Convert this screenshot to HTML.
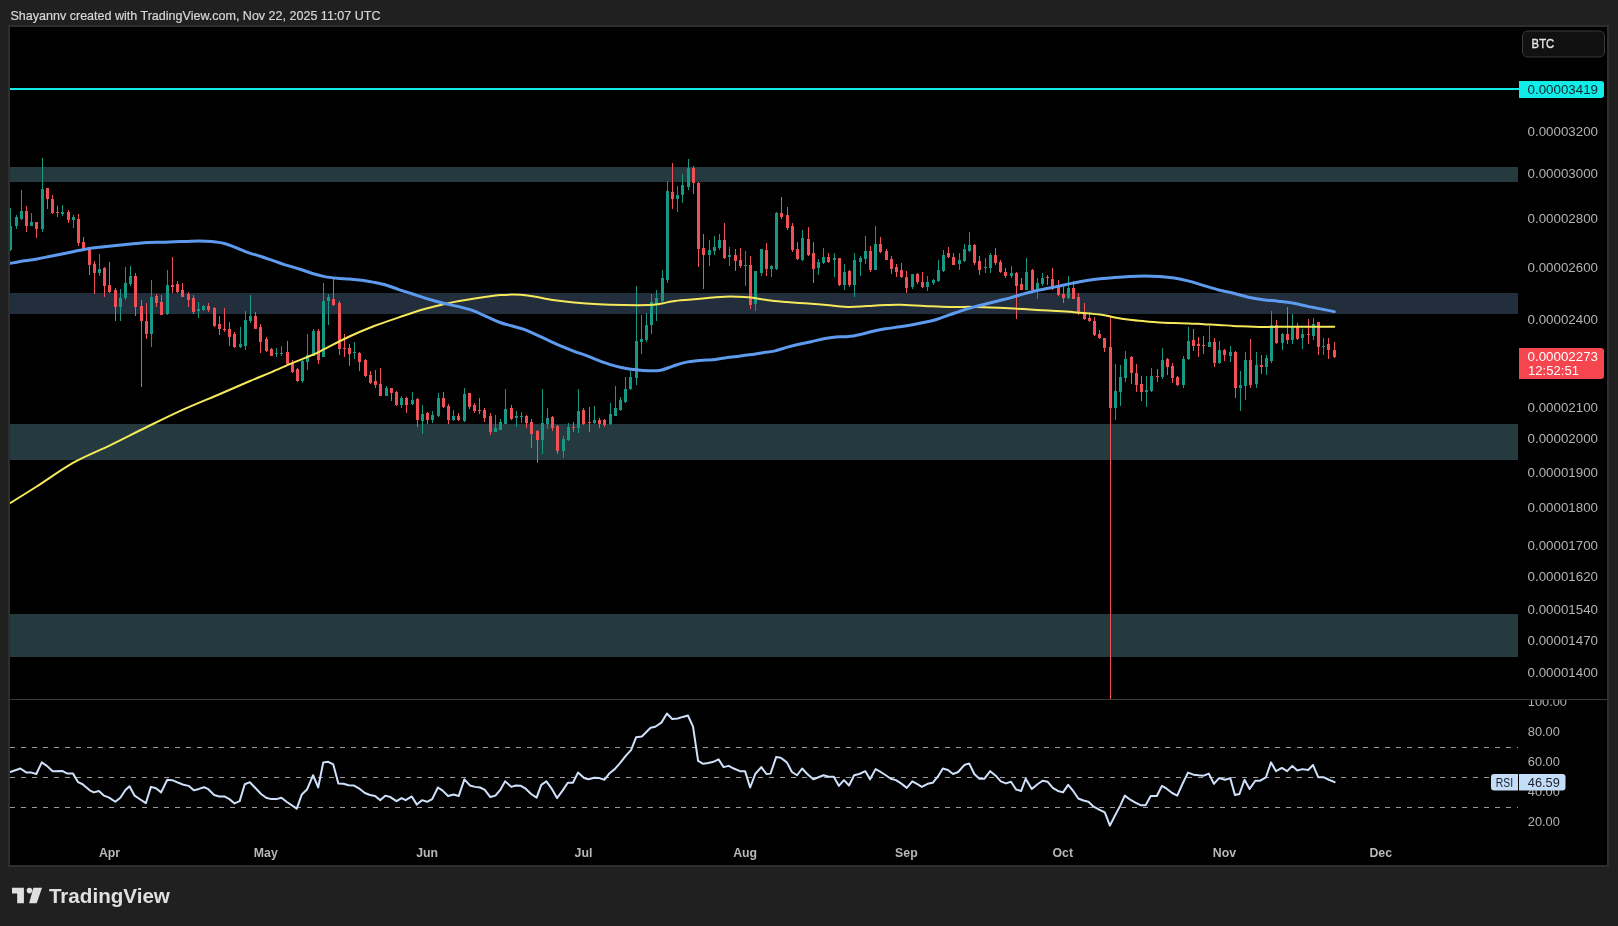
<!DOCTYPE html>
<html><head><meta charset="utf-8"><title>TradingView chart</title>
<style>html,body{margin:0;padding:0;background:#202020;}body{width:1618px;height:926px;position:relative;overflow:hidden;font-family:"Liberation Sans",sans-serif;}</style>
</head><body>
<svg width="1618" height="926" viewBox="0 0 1618 926" style="position:absolute;left:0;top:0;will-change:transform"><defs><clipPath id="cp"><rect x="10" y="27" width="1508" height="672"/></clipPath><clipPath id="cr"><rect x="10" y="700" width="1597" height="165"/></clipPath><clipPath id="ca"><rect x="1518" y="700" width="89" height="165"/></clipPath></defs><rect x="8" y="25" width="1601" height="842" fill="#2e2e2e"/><rect x="10" y="27" width="1597" height="838" fill="#000"/><text x="10.5" y="20" fill="#d6d6d6" font-size="12.6" stroke="#d6d6d6" stroke-width="0.2" font-family="Liberation Sans, sans-serif" textLength="370" lengthAdjust="spacingAndGlyphs">Shayannv created with TradingView.com, Nov 22, 2025 11:07 UTC</text><rect x="10" y="167" width="1508" height="15" fill="#243a3e"/><rect x="10" y="293" width="1508" height="21" fill="#232e3c"/><rect x="10" y="424" width="1508" height="36" fill="#243a3e"/><rect x="10" y="614" width="1508" height="43" fill="#243a3e"/><rect x="10" y="88" width="1509" height="2" fill="#12ece8"/><g clip-path="url(#cp)"><rect x="10" y="208" width="1" height="43" fill="#189784"/><rect x="9" y="226" width="3" height="24" fill="#189784"/><rect x="16" y="215" width="1" height="14" fill="#189784"/><rect x="15" y="217" width="3" height="9" fill="#189784"/><rect x="21" y="190" width="1" height="30" fill="#189784"/><rect x="20" y="211" width="3" height="8" fill="#189784"/><rect x="26" y="206" width="1" height="26" fill="#ef5156"/><rect x="25" y="211" width="3" height="15" fill="#ef5156"/><rect x="31" y="213" width="1" height="13" fill="#189784"/><rect x="30" y="222" width="3" height="4" fill="#189784"/><rect x="36" y="222" width="1" height="16" fill="#ef5156"/><rect x="35" y="222" width="3" height="7" fill="#ef5156"/><rect x="42" y="158" width="1" height="74" fill="#189784"/><rect x="41" y="189" width="3" height="40" fill="#189784"/><rect x="47" y="188" width="1" height="21" fill="#ef5156"/><rect x="46" y="188" width="3" height="11" fill="#ef5156"/><rect x="52" y="195" width="1" height="19" fill="#ef5156"/><rect x="51" y="199" width="3" height="14" fill="#ef5156"/><rect x="57" y="206" width="1" height="11" fill="#ef5156"/><rect x="56" y="212" width="3" height="1" fill="#ef5156"/><rect x="62" y="205" width="1" height="11" fill="#189784"/><rect x="61" y="212" width="3" height="2" fill="#189784"/><rect x="68" y="210" width="1" height="13" fill="#ef5156"/><rect x="67" y="212" width="3" height="8" fill="#ef5156"/><rect x="73" y="215" width="1" height="13" fill="#189784"/><rect x="72" y="217" width="3" height="3" fill="#189784"/><rect x="78" y="214" width="1" height="32" fill="#ef5156"/><rect x="77" y="219" width="3" height="24" fill="#ef5156"/><rect x="83" y="237" width="1" height="13" fill="#ef5156"/><rect x="82" y="242" width="3" height="7" fill="#ef5156"/><rect x="89" y="247" width="1" height="28" fill="#ef5156"/><rect x="88" y="247" width="3" height="18" fill="#ef5156"/><rect x="94" y="261" width="1" height="33" fill="#ef5156"/><rect x="93" y="264" width="3" height="9" fill="#ef5156"/><rect x="99" y="254" width="1" height="22" fill="#189784"/><rect x="98" y="269" width="3" height="4" fill="#189784"/><rect x="104" y="267" width="1" height="30" fill="#ef5156"/><rect x="103" y="268" width="3" height="18" fill="#ef5156"/><rect x="109" y="262" width="1" height="31" fill="#ef5156"/><rect x="108" y="285" width="3" height="7" fill="#ef5156"/><rect x="115" y="288" width="1" height="33" fill="#ef5156"/><rect x="114" y="290" width="3" height="17" fill="#ef5156"/><rect x="120" y="289" width="1" height="32" fill="#189784"/><rect x="119" y="298" width="3" height="9" fill="#189784"/><rect x="125" y="267" width="1" height="33" fill="#189784"/><rect x="124" y="283" width="3" height="15" fill="#189784"/><rect x="130" y="266" width="1" height="20" fill="#189784"/><rect x="129" y="276" width="3" height="8" fill="#189784"/><rect x="135" y="273" width="1" height="43" fill="#ef5156"/><rect x="134" y="276" width="3" height="31" fill="#ef5156"/><rect x="141" y="300" width="1" height="87" fill="#ef5156"/><rect x="140" y="306" width="3" height="15" fill="#ef5156"/><rect x="146" y="303" width="1" height="36" fill="#ef5156"/><rect x="145" y="321" width="3" height="13" fill="#ef5156"/><rect x="151" y="280" width="1" height="67" fill="#189784"/><rect x="150" y="297" width="3" height="37" fill="#189784"/><rect x="156" y="294" width="1" height="13" fill="#ef5156"/><rect x="155" y="296" width="3" height="7" fill="#ef5156"/><rect x="161" y="295" width="1" height="20" fill="#ef5156"/><rect x="160" y="302" width="3" height="13" fill="#ef5156"/><rect x="167" y="270" width="1" height="45" fill="#189784"/><rect x="166" y="285" width="3" height="29" fill="#189784"/><rect x="172" y="257" width="1" height="36" fill="#ef5156"/><rect x="171" y="285" width="3" height="2" fill="#ef5156"/><rect x="177" y="281" width="1" height="12" fill="#ef5156"/><rect x="176" y="284" width="3" height="8" fill="#ef5156"/><rect x="182" y="283" width="1" height="14" fill="#ef5156"/><rect x="181" y="290" width="3" height="7" fill="#ef5156"/><rect x="188" y="292" width="1" height="15" fill="#ef5156"/><rect x="187" y="294" width="3" height="6" fill="#ef5156"/><rect x="193" y="295" width="1" height="19" fill="#ef5156"/><rect x="192" y="298" width="3" height="14" fill="#ef5156"/><rect x="198" y="302" width="1" height="16" fill="#189784"/><rect x="197" y="309" width="3" height="2" fill="#189784"/><rect x="203" y="305" width="1" height="6" fill="#189784"/><rect x="202" y="306" width="3" height="4" fill="#189784"/><rect x="208" y="303" width="1" height="9" fill="#ef5156"/><rect x="207" y="306" width="3" height="4" fill="#ef5156"/><rect x="214" y="307" width="1" height="20" fill="#ef5156"/><rect x="213" y="308" width="3" height="18" fill="#ef5156"/><rect x="219" y="316" width="1" height="19" fill="#ef5156"/><rect x="218" y="324" width="3" height="5" fill="#ef5156"/><rect x="224" y="308" width="1" height="24" fill="#ef5156"/><rect x="223" y="329" width="3" height="1" fill="#ef5156"/><rect x="229" y="322" width="1" height="24" fill="#ef5156"/><rect x="228" y="329" width="3" height="8" fill="#ef5156"/><rect x="234" y="332" width="1" height="16" fill="#ef5156"/><rect x="233" y="334" width="3" height="13" fill="#ef5156"/><rect x="240" y="327" width="1" height="21" fill="#189784"/><rect x="239" y="344" width="3" height="3" fill="#189784"/><rect x="245" y="311" width="1" height="39" fill="#189784"/><rect x="244" y="320" width="3" height="26" fill="#189784"/><rect x="250" y="295" width="1" height="28" fill="#189784"/><rect x="249" y="316" width="3" height="5" fill="#189784"/><rect x="255" y="312" width="1" height="17" fill="#ef5156"/><rect x="254" y="316" width="3" height="13" fill="#ef5156"/><rect x="260" y="324" width="1" height="29" fill="#ef5156"/><rect x="259" y="327" width="3" height="15" fill="#ef5156"/><rect x="266" y="337" width="1" height="15" fill="#ef5156"/><rect x="265" y="339" width="3" height="12" fill="#ef5156"/><rect x="271" y="348" width="1" height="8" fill="#ef5156"/><rect x="270" y="349" width="3" height="7" fill="#ef5156"/><rect x="276" y="348" width="1" height="9" fill="#189784"/><rect x="275" y="353" width="3" height="1" fill="#189784"/><rect x="281" y="346" width="1" height="10" fill="#189784"/><rect x="280" y="353" width="3" height="1" fill="#189784"/><rect x="287" y="341" width="1" height="24" fill="#ef5156"/><rect x="286" y="352" width="3" height="12" fill="#ef5156"/><rect x="292" y="360" width="1" height="13" fill="#ef5156"/><rect x="291" y="363" width="3" height="9" fill="#ef5156"/><rect x="297" y="368" width="1" height="14" fill="#ef5156"/><rect x="296" y="369" width="3" height="12" fill="#ef5156"/><rect x="302" y="360" width="1" height="23" fill="#189784"/><rect x="301" y="361" width="3" height="20" fill="#189784"/><rect x="307" y="334" width="1" height="36" fill="#189784"/><rect x="306" y="355" width="3" height="7" fill="#189784"/><rect x="313" y="329" width="1" height="27" fill="#189784"/><rect x="312" y="331" width="3" height="25" fill="#189784"/><rect x="318" y="329" width="1" height="35" fill="#ef5156"/><rect x="317" y="331" width="3" height="29" fill="#ef5156"/><rect x="323" y="283" width="1" height="74" fill="#189784"/><rect x="322" y="301" width="3" height="56" fill="#189784"/><rect x="328" y="294" width="1" height="31" fill="#189784"/><rect x="327" y="297" width="3" height="4" fill="#189784"/><rect x="333" y="277" width="1" height="29" fill="#ef5156"/><rect x="332" y="299" width="3" height="6" fill="#ef5156"/><rect x="339" y="301" width="1" height="54" fill="#ef5156"/><rect x="338" y="303" width="3" height="46" fill="#ef5156"/><rect x="344" y="334" width="1" height="23" fill="#ef5156"/><rect x="343" y="348" width="3" height="1" fill="#ef5156"/><rect x="349" y="344" width="1" height="22" fill="#ef5156"/><rect x="348" y="348" width="3" height="6" fill="#ef5156"/><rect x="354" y="342" width="1" height="17" fill="#189784"/><rect x="353" y="352" width="3" height="1" fill="#189784"/><rect x="359" y="352" width="1" height="19" fill="#ef5156"/><rect x="358" y="353" width="3" height="9" fill="#ef5156"/><rect x="365" y="359" width="1" height="18" fill="#ef5156"/><rect x="364" y="360" width="3" height="16" fill="#ef5156"/><rect x="370" y="371" width="1" height="13" fill="#ef5156"/><rect x="369" y="375" width="3" height="8" fill="#ef5156"/><rect x="375" y="370" width="1" height="18" fill="#ef5156"/><rect x="374" y="381" width="3" height="4" fill="#ef5156"/><rect x="380" y="368" width="1" height="28" fill="#ef5156"/><rect x="379" y="384" width="3" height="12" fill="#ef5156"/><rect x="386" y="386" width="1" height="10" fill="#189784"/><rect x="385" y="388" width="3" height="8" fill="#189784"/><rect x="391" y="388" width="1" height="13" fill="#ef5156"/><rect x="390" y="388" width="3" height="5" fill="#ef5156"/><rect x="396" y="391" width="1" height="15" fill="#ef5156"/><rect x="395" y="392" width="3" height="13" fill="#ef5156"/><rect x="401" y="396" width="1" height="12" fill="#189784"/><rect x="400" y="398" width="3" height="7" fill="#189784"/><rect x="406" y="397" width="1" height="16" fill="#ef5156"/><rect x="405" y="398" width="3" height="7" fill="#ef5156"/><rect x="412" y="392" width="1" height="13" fill="#189784"/><rect x="411" y="400" width="3" height="4" fill="#189784"/><rect x="417" y="398" width="1" height="29" fill="#ef5156"/><rect x="416" y="399" width="3" height="21" fill="#ef5156"/><rect x="422" y="405" width="1" height="29" fill="#189784"/><rect x="421" y="414" width="3" height="7" fill="#189784"/><rect x="427" y="412" width="1" height="12" fill="#ef5156"/><rect x="426" y="413" width="3" height="7" fill="#ef5156"/><rect x="432" y="411" width="1" height="12" fill="#189784"/><rect x="431" y="415" width="3" height="5" fill="#189784"/><rect x="438" y="393" width="1" height="24" fill="#189784"/><rect x="437" y="398" width="3" height="18" fill="#189784"/><rect x="443" y="392" width="1" height="16" fill="#ef5156"/><rect x="442" y="398" width="3" height="9" fill="#ef5156"/><rect x="448" y="404" width="1" height="20" fill="#ef5156"/><rect x="447" y="406" width="3" height="14" fill="#ef5156"/><rect x="453" y="410" width="1" height="11" fill="#189784"/><rect x="452" y="416" width="3" height="4" fill="#189784"/><rect x="458" y="413" width="1" height="8" fill="#ef5156"/><rect x="457" y="416" width="3" height="4" fill="#ef5156"/><rect x="464" y="388" width="1" height="34" fill="#189784"/><rect x="463" y="394" width="3" height="27" fill="#189784"/><rect x="469" y="393" width="1" height="16" fill="#ef5156"/><rect x="468" y="393" width="3" height="14" fill="#ef5156"/><rect x="474" y="403" width="1" height="10" fill="#ef5156"/><rect x="473" y="405" width="3" height="6" fill="#ef5156"/><rect x="479" y="398" width="1" height="16" fill="#ef5156"/><rect x="478" y="410" width="3" height="1" fill="#ef5156"/><rect x="484" y="408" width="1" height="14" fill="#ef5156"/><rect x="483" y="410" width="3" height="8" fill="#ef5156"/><rect x="490" y="413" width="1" height="22" fill="#ef5156"/><rect x="489" y="416" width="3" height="16" fill="#ef5156"/><rect x="495" y="415" width="1" height="17" fill="#189784"/><rect x="494" y="428" width="3" height="4" fill="#189784"/><rect x="500" y="419" width="1" height="11" fill="#189784"/><rect x="499" y="422" width="3" height="8" fill="#189784"/><rect x="505" y="389" width="1" height="35" fill="#189784"/><rect x="504" y="409" width="3" height="15" fill="#189784"/><rect x="511" y="405" width="1" height="15" fill="#ef5156"/><rect x="510" y="408" width="3" height="11" fill="#ef5156"/><rect x="516" y="411" width="1" height="16" fill="#189784"/><rect x="515" y="416" width="3" height="2" fill="#189784"/><rect x="521" y="412" width="1" height="11" fill="#189784"/><rect x="520" y="416" width="3" height="1" fill="#189784"/><rect x="526" y="415" width="1" height="13" fill="#ef5156"/><rect x="525" y="416" width="3" height="7" fill="#ef5156"/><rect x="531" y="419" width="1" height="29" fill="#ef5156"/><rect x="530" y="422" width="3" height="12" fill="#ef5156"/><rect x="537" y="430" width="1" height="33" fill="#ef5156"/><rect x="536" y="431" width="3" height="9" fill="#ef5156"/><rect x="542" y="389" width="1" height="65" fill="#189784"/><rect x="541" y="423" width="3" height="17" fill="#189784"/><rect x="547" y="408" width="1" height="21" fill="#189784"/><rect x="546" y="418" width="3" height="6" fill="#189784"/><rect x="552" y="416" width="1" height="15" fill="#ef5156"/><rect x="551" y="417" width="3" height="11" fill="#ef5156"/><rect x="557" y="425" width="1" height="29" fill="#ef5156"/><rect x="556" y="426" width="3" height="25" fill="#ef5156"/><rect x="563" y="436" width="1" height="22" fill="#189784"/><rect x="562" y="439" width="3" height="12" fill="#189784"/><rect x="568" y="423" width="1" height="18" fill="#189784"/><rect x="567" y="427" width="3" height="13" fill="#189784"/><rect x="573" y="422" width="1" height="10" fill="#ef5156"/><rect x="572" y="427" width="3" height="1" fill="#ef5156"/><rect x="578" y="389" width="1" height="44" fill="#189784"/><rect x="577" y="411" width="3" height="17" fill="#189784"/><rect x="583" y="408" width="1" height="17" fill="#ef5156"/><rect x="582" y="410" width="3" height="14" fill="#ef5156"/><rect x="589" y="407" width="1" height="25" fill="#ef5156"/><rect x="588" y="422" width="3" height="1" fill="#ef5156"/><rect x="594" y="406" width="1" height="18" fill="#189784"/><rect x="593" y="420" width="3" height="3" fill="#189784"/><rect x="599" y="418" width="1" height="10" fill="#ef5156"/><rect x="598" y="420" width="3" height="4" fill="#ef5156"/><rect x="604" y="419" width="1" height="8" fill="#ef5156"/><rect x="603" y="420" width="3" height="5" fill="#ef5156"/><rect x="610" y="403" width="1" height="22" fill="#189784"/><rect x="609" y="414" width="3" height="10" fill="#189784"/><rect x="615" y="386" width="1" height="30" fill="#189784"/><rect x="614" y="408" width="3" height="8" fill="#189784"/><rect x="620" y="397" width="1" height="14" fill="#189784"/><rect x="619" y="400" width="3" height="10" fill="#189784"/><rect x="625" y="377" width="1" height="26" fill="#189784"/><rect x="624" y="389" width="3" height="13" fill="#189784"/><rect x="630" y="371" width="1" height="19" fill="#189784"/><rect x="629" y="377" width="3" height="12" fill="#189784"/><rect x="636" y="286" width="1" height="99" fill="#189784"/><rect x="635" y="341" width="3" height="37" fill="#189784"/><rect x="641" y="315" width="1" height="39" fill="#189784"/><rect x="640" y="339" width="3" height="3" fill="#189784"/><rect x="646" y="313" width="1" height="29" fill="#189784"/><rect x="645" y="325" width="3" height="15" fill="#189784"/><rect x="651" y="294" width="1" height="40" fill="#189784"/><rect x="650" y="302" width="3" height="23" fill="#189784"/><rect x="656" y="290" width="1" height="31" fill="#189784"/><rect x="655" y="298" width="3" height="7" fill="#189784"/><rect x="662" y="270" width="1" height="34" fill="#189784"/><rect x="661" y="278" width="3" height="23" fill="#189784"/><rect x="667" y="181" width="1" height="102" fill="#189784"/><rect x="666" y="191" width="3" height="89" fill="#189784"/><rect x="672" y="163" width="1" height="46" fill="#ef5156"/><rect x="671" y="192" width="3" height="7" fill="#ef5156"/><rect x="677" y="186" width="1" height="26" fill="#189784"/><rect x="676" y="195" width="3" height="4" fill="#189784"/><rect x="682" y="174" width="1" height="29" fill="#189784"/><rect x="681" y="185" width="3" height="10" fill="#189784"/><rect x="688" y="159" width="1" height="31" fill="#189784"/><rect x="687" y="168" width="3" height="19" fill="#189784"/><rect x="693" y="166" width="1" height="28" fill="#ef5156"/><rect x="692" y="168" width="3" height="15" fill="#ef5156"/><rect x="698" y="182" width="1" height="85" fill="#ef5156"/><rect x="697" y="183" width="3" height="66" fill="#ef5156"/><rect x="703" y="234" width="1" height="55" fill="#ef5156"/><rect x="702" y="248" width="3" height="7" fill="#ef5156"/><rect x="709" y="240" width="1" height="26" fill="#189784"/><rect x="708" y="250" width="3" height="5" fill="#189784"/><rect x="714" y="236" width="1" height="19" fill="#189784"/><rect x="713" y="247" width="3" height="4" fill="#189784"/><rect x="719" y="234" width="1" height="16" fill="#189784"/><rect x="718" y="240" width="3" height="8" fill="#189784"/><rect x="724" y="223" width="1" height="36" fill="#ef5156"/><rect x="723" y="240" width="3" height="18" fill="#ef5156"/><rect x="729" y="247" width="1" height="19" fill="#189784"/><rect x="728" y="255" width="3" height="2" fill="#189784"/><rect x="735" y="249" width="1" height="22" fill="#ef5156"/><rect x="734" y="255" width="3" height="6" fill="#ef5156"/><rect x="740" y="248" width="1" height="20" fill="#ef5156"/><rect x="739" y="260" width="3" height="6" fill="#ef5156"/><rect x="745" y="251" width="1" height="35" fill="#189784"/><rect x="744" y="265" width="3" height="1" fill="#189784"/><rect x="750" y="256" width="1" height="53" fill="#ef5156"/><rect x="749" y="265" width="3" height="40" fill="#ef5156"/><rect x="755" y="271" width="1" height="40" fill="#189784"/><rect x="754" y="271" width="3" height="33" fill="#189784"/><rect x="761" y="249" width="1" height="27" fill="#189784"/><rect x="760" y="249" width="3" height="24" fill="#189784"/><rect x="766" y="243" width="1" height="33" fill="#ef5156"/><rect x="765" y="250" width="3" height="19" fill="#ef5156"/><rect x="771" y="265" width="1" height="12" fill="#189784"/><rect x="770" y="266" width="3" height="3" fill="#189784"/><rect x="776" y="212" width="1" height="58" fill="#189784"/><rect x="775" y="213" width="3" height="56" fill="#189784"/><rect x="781" y="197" width="1" height="22" fill="#ef5156"/><rect x="780" y="213" width="3" height="4" fill="#ef5156"/><rect x="787" y="207" width="1" height="23" fill="#ef5156"/><rect x="786" y="215" width="3" height="13" fill="#ef5156"/><rect x="792" y="223" width="1" height="29" fill="#ef5156"/><rect x="791" y="226" width="3" height="24" fill="#ef5156"/><rect x="797" y="242" width="1" height="18" fill="#ef5156"/><rect x="796" y="249" width="3" height="10" fill="#ef5156"/><rect x="802" y="230" width="1" height="31" fill="#189784"/><rect x="801" y="238" width="3" height="22" fill="#189784"/><rect x="808" y="227" width="1" height="29" fill="#ef5156"/><rect x="807" y="239" width="3" height="16" fill="#ef5156"/><rect x="813" y="242" width="1" height="41" fill="#ef5156"/><rect x="812" y="253" width="3" height="16" fill="#ef5156"/><rect x="818" y="259" width="1" height="16" fill="#189784"/><rect x="817" y="262" width="3" height="6" fill="#189784"/><rect x="823" y="248" width="1" height="16" fill="#189784"/><rect x="822" y="257" width="3" height="6" fill="#189784"/><rect x="828" y="253" width="1" height="10" fill="#ef5156"/><rect x="827" y="257" width="3" height="5" fill="#ef5156"/><rect x="834" y="253" width="1" height="24" fill="#189784"/><rect x="833" y="258" width="3" height="2" fill="#189784"/><rect x="839" y="258" width="1" height="28" fill="#ef5156"/><rect x="838" y="258" width="3" height="27" fill="#ef5156"/><rect x="844" y="264" width="1" height="26" fill="#189784"/><rect x="843" y="272" width="3" height="13" fill="#189784"/><rect x="849" y="270" width="1" height="17" fill="#ef5156"/><rect x="848" y="271" width="3" height="14" fill="#ef5156"/><rect x="854" y="253" width="1" height="44" fill="#189784"/><rect x="853" y="260" width="3" height="25" fill="#189784"/><rect x="860" y="256" width="1" height="20" fill="#189784"/><rect x="859" y="258" width="3" height="4" fill="#189784"/><rect x="865" y="236" width="1" height="28" fill="#189784"/><rect x="864" y="251" width="3" height="8" fill="#189784"/><rect x="870" y="246" width="1" height="26" fill="#ef5156"/><rect x="869" y="251" width="3" height="19" fill="#ef5156"/><rect x="875" y="226" width="1" height="44" fill="#189784"/><rect x="874" y="244" width="3" height="26" fill="#189784"/><rect x="880" y="237" width="1" height="16" fill="#ef5156"/><rect x="879" y="244" width="3" height="8" fill="#ef5156"/><rect x="886" y="249" width="1" height="11" fill="#ef5156"/><rect x="885" y="251" width="3" height="9" fill="#ef5156"/><rect x="891" y="256" width="1" height="18" fill="#ef5156"/><rect x="890" y="259" width="3" height="10" fill="#ef5156"/><rect x="896" y="264" width="1" height="13" fill="#ef5156"/><rect x="895" y="267" width="3" height="5" fill="#ef5156"/><rect x="901" y="263" width="1" height="15" fill="#ef5156"/><rect x="900" y="270" width="3" height="7" fill="#ef5156"/><rect x="906" y="271" width="1" height="22" fill="#ef5156"/><rect x="905" y="277" width="3" height="11" fill="#ef5156"/><rect x="912" y="274" width="1" height="15" fill="#189784"/><rect x="911" y="274" width="3" height="13" fill="#189784"/><rect x="917" y="273" width="1" height="11" fill="#ef5156"/><rect x="916" y="274" width="3" height="8" fill="#ef5156"/><rect x="922" y="272" width="1" height="16" fill="#ef5156"/><rect x="921" y="282" width="3" height="5" fill="#ef5156"/><rect x="927" y="276" width="1" height="15" fill="#189784"/><rect x="926" y="282" width="3" height="5" fill="#189784"/><rect x="933" y="279" width="1" height="6" fill="#189784"/><rect x="932" y="280" width="3" height="3" fill="#189784"/><rect x="938" y="260" width="1" height="22" fill="#189784"/><rect x="937" y="270" width="3" height="11" fill="#189784"/><rect x="943" y="250" width="1" height="22" fill="#189784"/><rect x="942" y="255" width="3" height="16" fill="#189784"/><rect x="948" y="247" width="1" height="11" fill="#ef5156"/><rect x="947" y="253" width="3" height="4" fill="#ef5156"/><rect x="953" y="253" width="1" height="12" fill="#ef5156"/><rect x="952" y="257" width="3" height="8" fill="#ef5156"/><rect x="959" y="253" width="1" height="17" fill="#189784"/><rect x="958" y="260" width="3" height="4" fill="#189784"/><rect x="964" y="244" width="1" height="18" fill="#189784"/><rect x="963" y="249" width="3" height="12" fill="#189784"/><rect x="969" y="232" width="1" height="20" fill="#189784"/><rect x="968" y="245" width="3" height="6" fill="#189784"/><rect x="974" y="244" width="1" height="21" fill="#ef5156"/><rect x="973" y="245" width="3" height="18" fill="#ef5156"/><rect x="979" y="256" width="1" height="19" fill="#ef5156"/><rect x="978" y="261" width="3" height="9" fill="#ef5156"/><rect x="985" y="258" width="1" height="15" fill="#189784"/><rect x="984" y="267" width="3" height="1" fill="#189784"/><rect x="990" y="253" width="1" height="20" fill="#189784"/><rect x="989" y="255" width="3" height="13" fill="#189784"/><rect x="995" y="248" width="1" height="17" fill="#ef5156"/><rect x="994" y="255" width="3" height="8" fill="#ef5156"/><rect x="1000" y="260" width="1" height="13" fill="#ef5156"/><rect x="999" y="262" width="3" height="10" fill="#ef5156"/><rect x="1005" y="268" width="1" height="10" fill="#ef5156"/><rect x="1004" y="272" width="3" height="4" fill="#ef5156"/><rect x="1011" y="266" width="1" height="12" fill="#189784"/><rect x="1010" y="273" width="3" height="3" fill="#189784"/><rect x="1016" y="272" width="1" height="47" fill="#ef5156"/><rect x="1015" y="273" width="3" height="13" fill="#ef5156"/><rect x="1021" y="278" width="1" height="12" fill="#ef5156"/><rect x="1020" y="284" width="3" height="6" fill="#ef5156"/><rect x="1026" y="258" width="1" height="32" fill="#189784"/><rect x="1025" y="272" width="3" height="18" fill="#189784"/><rect x="1032" y="269" width="1" height="22" fill="#ef5156"/><rect x="1031" y="270" width="3" height="20" fill="#ef5156"/><rect x="1037" y="278" width="1" height="21" fill="#189784"/><rect x="1036" y="283" width="3" height="7" fill="#189784"/><rect x="1042" y="273" width="1" height="13" fill="#189784"/><rect x="1041" y="278" width="3" height="6" fill="#189784"/><rect x="1047" y="275" width="1" height="10" fill="#ef5156"/><rect x="1046" y="277" width="3" height="1" fill="#ef5156"/><rect x="1052" y="268" width="1" height="22" fill="#ef5156"/><rect x="1051" y="279" width="3" height="10" fill="#ef5156"/><rect x="1058" y="280" width="1" height="16" fill="#ef5156"/><rect x="1057" y="286" width="3" height="9" fill="#ef5156"/><rect x="1063" y="287" width="1" height="16" fill="#ef5156"/><rect x="1062" y="294" width="3" height="4" fill="#ef5156"/><rect x="1068" y="276" width="1" height="23" fill="#189784"/><rect x="1067" y="288" width="3" height="10" fill="#189784"/><rect x="1073" y="281" width="1" height="18" fill="#ef5156"/><rect x="1072" y="288" width="3" height="11" fill="#ef5156"/><rect x="1078" y="293" width="1" height="22" fill="#ef5156"/><rect x="1077" y="297" width="3" height="16" fill="#ef5156"/><rect x="1084" y="303" width="1" height="17" fill="#ef5156"/><rect x="1083" y="312" width="3" height="7" fill="#ef5156"/><rect x="1089" y="313" width="1" height="9" fill="#ef5156"/><rect x="1088" y="318" width="3" height="3" fill="#ef5156"/><rect x="1094" y="317" width="1" height="19" fill="#ef5156"/><rect x="1093" y="321" width="3" height="14" fill="#ef5156"/><rect x="1099" y="330" width="1" height="9" fill="#ef5156"/><rect x="1098" y="334" width="3" height="4" fill="#ef5156"/><rect x="1104" y="338" width="1" height="14" fill="#ef5156"/><rect x="1103" y="338" width="3" height="10" fill="#ef5156"/><rect x="1110" y="317" width="1" height="382" fill="#ef5156"/><rect x="1109" y="347" width="3" height="61" fill="#ef5156"/><rect x="1115" y="364" width="1" height="56" fill="#189784"/><rect x="1114" y="391" width="3" height="17" fill="#189784"/><rect x="1120" y="365" width="1" height="41" fill="#189784"/><rect x="1119" y="377" width="3" height="15" fill="#189784"/><rect x="1125" y="351" width="1" height="31" fill="#189784"/><rect x="1124" y="359" width="3" height="19" fill="#189784"/><rect x="1131" y="356" width="1" height="28" fill="#ef5156"/><rect x="1130" y="357" width="3" height="16" fill="#ef5156"/><rect x="1136" y="364" width="1" height="28" fill="#ef5156"/><rect x="1135" y="373" width="3" height="12" fill="#ef5156"/><rect x="1141" y="376" width="1" height="25" fill="#ef5156"/><rect x="1140" y="384" width="3" height="8" fill="#ef5156"/><rect x="1146" y="376" width="1" height="31" fill="#189784"/><rect x="1145" y="390" width="3" height="2" fill="#189784"/><rect x="1151" y="368" width="1" height="24" fill="#189784"/><rect x="1150" y="376" width="3" height="15" fill="#189784"/><rect x="1157" y="369" width="1" height="13" fill="#ef5156"/><rect x="1156" y="376" width="3" height="1" fill="#ef5156"/><rect x="1162" y="348" width="1" height="31" fill="#189784"/><rect x="1161" y="360" width="3" height="17" fill="#189784"/><rect x="1167" y="358" width="1" height="17" fill="#ef5156"/><rect x="1166" y="359" width="3" height="8" fill="#ef5156"/><rect x="1172" y="363" width="1" height="20" fill="#ef5156"/><rect x="1171" y="366" width="3" height="12" fill="#ef5156"/><rect x="1177" y="376" width="1" height="10" fill="#ef5156"/><rect x="1176" y="377" width="3" height="8" fill="#ef5156"/><rect x="1183" y="356" width="1" height="32" fill="#189784"/><rect x="1182" y="359" width="3" height="26" fill="#189784"/><rect x="1188" y="327" width="1" height="33" fill="#189784"/><rect x="1187" y="341" width="3" height="18" fill="#189784"/><rect x="1193" y="329" width="1" height="22" fill="#ef5156"/><rect x="1192" y="340" width="3" height="6" fill="#ef5156"/><rect x="1198" y="337" width="1" height="20" fill="#ef5156"/><rect x="1197" y="344" width="3" height="2" fill="#ef5156"/><rect x="1203" y="336" width="1" height="18" fill="#ef5156"/><rect x="1202" y="345" width="3" height="1" fill="#ef5156"/><rect x="1209" y="326" width="1" height="21" fill="#189784"/><rect x="1208" y="342" width="3" height="5" fill="#189784"/><rect x="1214" y="338" width="1" height="29" fill="#ef5156"/><rect x="1213" y="342" width="3" height="21" fill="#ef5156"/><rect x="1219" y="341" width="1" height="23" fill="#189784"/><rect x="1218" y="350" width="3" height="13" fill="#189784"/><rect x="1224" y="349" width="1" height="12" fill="#ef5156"/><rect x="1223" y="350" width="3" height="5" fill="#ef5156"/><rect x="1230" y="346" width="1" height="16" fill="#189784"/><rect x="1229" y="352" width="3" height="4" fill="#189784"/><rect x="1235" y="351" width="1" height="47" fill="#ef5156"/><rect x="1234" y="352" width="3" height="36" fill="#ef5156"/><rect x="1240" y="371" width="1" height="40" fill="#189784"/><rect x="1239" y="385" width="3" height="3" fill="#189784"/><rect x="1245" y="352" width="1" height="48" fill="#189784"/><rect x="1244" y="360" width="3" height="26" fill="#189784"/><rect x="1250" y="339" width="1" height="49" fill="#ef5156"/><rect x="1249" y="360" width="3" height="25" fill="#ef5156"/><rect x="1256" y="352" width="1" height="36" fill="#189784"/><rect x="1255" y="365" width="3" height="19" fill="#189784"/><rect x="1261" y="355" width="1" height="19" fill="#ef5156"/><rect x="1260" y="365" width="3" height="2" fill="#ef5156"/><rect x="1266" y="355" width="1" height="20" fill="#189784"/><rect x="1265" y="358" width="3" height="9" fill="#189784"/><rect x="1271" y="311" width="1" height="52" fill="#189784"/><rect x="1270" y="325" width="3" height="36" fill="#189784"/><rect x="1276" y="320" width="1" height="24" fill="#ef5156"/><rect x="1275" y="325" width="3" height="18" fill="#ef5156"/><rect x="1282" y="333" width="1" height="17" fill="#189784"/><rect x="1281" y="334" width="3" height="9" fill="#189784"/><rect x="1287" y="307" width="1" height="37" fill="#ef5156"/><rect x="1286" y="334" width="3" height="6" fill="#ef5156"/><rect x="1292" y="314" width="1" height="30" fill="#189784"/><rect x="1291" y="327" width="3" height="13" fill="#189784"/><rect x="1297" y="323" width="1" height="17" fill="#ef5156"/><rect x="1296" y="326" width="3" height="13" fill="#ef5156"/><rect x="1302" y="329" width="1" height="20" fill="#189784"/><rect x="1301" y="334" width="3" height="4" fill="#189784"/><rect x="1308" y="319" width="1" height="25" fill="#ef5156"/><rect x="1307" y="334" width="3" height="1" fill="#ef5156"/><rect x="1313" y="318" width="1" height="22" fill="#189784"/><rect x="1312" y="324" width="3" height="12" fill="#189784"/><rect x="1318" y="322" width="1" height="33" fill="#ef5156"/><rect x="1317" y="322" width="3" height="25" fill="#ef5156"/><rect x="1323" y="338" width="1" height="17" fill="#189784"/><rect x="1322" y="346" width="3" height="1" fill="#189784"/><rect x="1328" y="338" width="1" height="21" fill="#ef5156"/><rect x="1327" y="344" width="3" height="6" fill="#ef5156"/><rect x="1334" y="342" width="1" height="16" fill="#ef5156"/><rect x="1333" y="350" width="3" height="7" fill="#ef5156"/></g><g clip-path="url(#cp)"><path fill="none" stroke="#f5e85a" stroke-width="2" stroke-linecap="round" d="M10.3,503 C14.7,500.25 26.18,493.23 36.7,486.5 C47.22,479.77 61.18,469.47 73.4,462.6 C85.62,455.73 97.77,451.23 110,445.3 C122.23,439.37 134.53,432.98 146.8,427 C159.07,421.02 171.4,414.9 183.6,409.4 C195.8,403.9 208.93,398.73 220,394 C231.07,389.27 241.4,384.65 250,381 C258.6,377.35 264.4,375.17 271.6,372.1 C278.8,369.03 286,365.62 293.2,362.6 C300.4,359.58 309.55,356.28 314.8,354 C320.05,351.72 318.93,351.82 324.7,348.9 C330.47,345.98 341.15,340.32 349.4,336.5 C357.65,332.68 365.95,329.18 374.2,326 C382.45,322.82 390.67,320.18 398.9,317.4 C407.13,314.62 415.37,311.67 423.6,309.3 C431.83,306.93 440.07,304.95 448.3,303.2 C456.53,301.45 464.38,300.15 473,298.8 C481.62,297.45 492.08,295.77 500,295.1 C507.92,294.43 514.83,294.57 520.5,294.8 C526.17,295.03 528.58,295.63 534,296.5 C539.42,297.37 546.33,299 553,300 C559.67,301 566.33,301.78 574,302.5 C581.67,303.22 590.73,303.88 599,304.3 C607.27,304.72 615.43,304.88 623.6,305 C631.77,305.12 641.82,305.22 648,305 C654.18,304.78 656.53,304.33 660.7,303.7 C664.87,303.07 667.85,301.9 673,301.2 C678.15,300.5 685.03,300.1 691.6,299.5 C698.17,298.9 706.88,298.07 712.4,297.6 C717.92,297.13 720.58,296.85 724.7,296.7 C728.82,296.55 732.98,296.6 737.1,296.7 C741.22,296.8 745.28,296.88 749.4,297.3 C753.52,297.72 757.67,298.58 761.8,299.2 C765.93,299.82 770.08,300.53 774.2,301 C778.32,301.47 782.38,301.68 786.5,302 C790.62,302.32 794.78,302.62 798.9,302.9 C803.02,303.18 807.08,303.4 811.2,303.7 C815.32,304 819.47,304.32 823.6,304.7 C827.73,305.08 831.88,305.63 836,306 C840.12,306.37 844.18,306.8 848.3,306.9 C852.42,307 856.58,306.8 860.7,306.6 C864.82,306.4 868.88,305.95 873,305.7 C877.12,305.45 880.9,305.25 885.4,305.1 C889.9,304.95 893.45,304.67 900,304.8 C906.55,304.93 916.47,305.55 924.7,305.9 C932.93,306.25 941.15,306.73 949.4,306.9 C957.65,307.07 965.95,306.75 974.2,306.9 C982.45,307.05 990.67,307.43 998.9,307.8 C1007.13,308.17 1015.37,308.63 1023.6,309.1 C1031.83,309.57 1040.07,310.1 1048.3,310.6 C1056.53,311.1 1064.38,311.45 1073,312.1 C1081.62,312.75 1093.03,313.6 1100,314.5 C1106.97,315.4 1109.85,316.63 1114.8,317.5 C1119.75,318.37 1124.75,319.08 1129.7,319.7 C1134.65,320.32 1139.57,320.75 1144.5,321.2 C1149.43,321.65 1154.35,322.1 1159.3,322.4 C1164.25,322.7 1169.25,322.83 1174.2,323 C1179.15,323.17 1184.07,323.2 1189,323.4 C1193.93,323.6 1198.85,323.95 1203.8,324.2 C1208.75,324.45 1213.75,324.62 1218.7,324.9 C1223.65,325.18 1228.57,325.65 1233.5,325.9 C1238.43,326.15 1243.35,326.2 1248.3,326.4 C1253.25,326.6 1258.25,327.03 1263.2,327.1 C1268.15,327.17 1266.15,326.85 1278,326.8 C1289.85,326.75 1324.92,326.8 1334.3,326.8"/><path fill="none" stroke="#5e9bef" stroke-width="3" stroke-linecap="round" d="M10.5,263.3 C12.87,262.88 20.27,261.53 24.7,260.8 C29.13,260.07 32.98,259.62 37.1,258.9 C41.22,258.18 45.28,257.32 49.4,256.5 C53.52,255.68 57.67,254.83 61.8,254 C65.93,253.17 70.08,252.33 74.2,251.5 C78.32,250.67 82.38,249.72 86.5,249 C90.62,248.28 94.78,247.7 98.9,247.2 C103.02,246.7 107.08,246.42 111.2,246 C115.32,245.58 119.47,245.12 123.6,244.7 C127.73,244.28 131.88,243.87 136,243.5 C140.12,243.13 143.9,242.7 148.3,242.5 C152.7,242.3 158,242.42 162.4,242.3 C166.8,242.18 170.58,241.95 174.7,241.8 C178.82,241.65 182.98,241.53 187.1,241.4 C191.22,241.27 195.28,240.97 199.4,241 C203.52,241.03 207.67,241.18 211.8,241.6 C215.93,242.02 220.08,242.47 224.2,243.5 C228.32,244.53 232.38,246.25 236.5,247.8 C240.62,249.35 244.78,251.35 248.9,252.8 C253.02,254.25 257.08,255.17 261.2,256.5 C265.32,257.83 269.47,259.37 273.6,260.8 C277.73,262.23 281.6,263.7 286,265.1 C290.4,266.5 295.6,267.8 300,269.2 C304.4,270.6 308.28,272.27 312.4,273.5 C316.52,274.73 320.58,275.82 324.7,276.6 C328.82,277.38 332.98,277.8 337.1,278.2 C341.22,278.6 345.28,278.65 349.4,279 C353.52,279.35 357.67,279.73 361.8,280.3 C365.93,280.87 370.08,281.58 374.2,282.4 C378.32,283.22 382.38,284 386.5,285.2 C390.62,286.4 394.78,288.22 398.9,289.6 C403.02,290.98 407.08,292.17 411.2,293.5 C415.32,294.83 419.47,296.3 423.6,297.6 C427.73,298.9 431.88,300.17 436,301.3 C440.12,302.43 444.18,303.43 448.3,304.4 C452.42,305.37 456.58,306.07 460.7,307.1 C464.82,308.13 468.88,309.1 473,310.6 C477.12,312.1 480.9,314.12 485.4,316.1 C489.9,318.08 495.5,320.85 500,322.5 C504.5,324.15 508.28,324.8 512.4,326 C516.52,327.2 520.58,328.17 524.7,329.7 C528.82,331.23 532.98,333.35 537.1,335.2 C541.22,337.05 545.28,338.93 549.4,340.8 C553.52,342.67 557.67,344.65 561.8,346.4 C565.93,348.15 570.08,349.77 574.2,351.3 C578.32,352.83 582.38,354.05 586.5,355.6 C590.62,357.15 594.78,359.05 598.9,360.6 C603.02,362.15 607.08,363.67 611.2,364.9 C615.32,366.13 619.47,367.18 623.6,368 C627.73,368.82 631.88,369.35 636,369.8 C640.12,370.25 644.18,370.63 648.3,370.7 C652.42,370.77 656.58,370.97 660.7,370.2 C664.82,369.43 668.88,367.4 673,366.1 C677.12,364.8 680.9,363.33 685.4,362.4 C689.9,361.47 695.5,360.95 700,360.5 C704.5,360.05 708.28,360.13 712.4,359.7 C716.52,359.27 720.58,358.45 724.7,357.9 C728.82,357.35 732.98,356.92 737.1,356.4 C741.22,355.88 745.28,355.38 749.4,354.8 C753.52,354.22 757.67,353.52 761.8,352.9 C765.93,352.28 770.08,352.02 774.2,351.1 C778.32,350.18 782.38,348.53 786.5,347.4 C790.62,346.27 794.78,345.23 798.9,344.3 C803.02,343.37 807.08,342.73 811.2,341.8 C815.32,340.87 819.47,339.52 823.6,338.7 C827.73,337.88 831.88,337.25 836,336.9 C840.12,336.55 844.18,337.02 848.3,336.6 C852.42,336.18 856.58,335.28 860.7,334.4 C864.82,333.52 868.88,332.23 873,331.3 C877.12,330.37 880.9,329.55 885.4,328.8 C889.9,328.05 895.5,327.47 900,326.8 C904.5,326.13 908.28,325.55 912.4,324.8 C916.52,324.05 920.58,323.23 924.7,322.3 C928.82,321.37 932.98,320.43 937.1,319.2 C941.22,317.97 945.28,316.33 949.4,314.9 C953.52,313.47 957.67,311.93 961.8,310.6 C965.93,309.27 970.08,308.03 974.2,306.9 C978.32,305.77 982.38,304.83 986.5,303.8 C990.62,302.77 994.78,301.73 998.9,300.7 C1003.02,299.67 1007.08,298.73 1011.2,297.6 C1015.32,296.47 1019.47,295.03 1023.6,293.9 C1027.73,292.77 1031.88,291.73 1036,290.8 C1040.12,289.87 1044.18,289.13 1048.3,288.3 C1052.42,287.47 1056.58,286.67 1060.7,285.8 C1064.82,284.93 1068.88,283.95 1073,283.1 C1077.12,282.25 1080.9,281.42 1085.4,280.7 C1089.9,279.98 1095.1,279.35 1100,278.8 C1104.9,278.25 1109.85,277.8 1114.8,277.4 C1119.75,277 1124.75,276.63 1129.7,276.4 C1134.65,276.17 1139.57,276 1144.5,276 C1149.43,276 1154.35,276.08 1159.3,276.4 C1164.25,276.72 1169.25,277.12 1174.2,277.9 C1179.15,278.68 1184.07,279.82 1189,281.1 C1193.93,282.38 1198.85,284.12 1203.8,285.6 C1208.75,287.08 1213.75,288.72 1218.7,290 C1223.65,291.28 1228.57,292.1 1233.5,293.3 C1238.43,294.5 1243.35,296.13 1248.3,297.2 C1253.25,298.27 1258.25,299.03 1263.2,299.7 C1268.15,300.37 1273.07,300.63 1278,301.2 C1282.93,301.77 1287.85,302.23 1292.8,303.1 C1297.75,303.97 1302.75,305.37 1307.7,306.4 C1312.65,307.43 1318.07,308.43 1322.5,309.3 C1326.93,310.17 1332.33,311.22 1334.3,311.6"/></g><text x="1598" y="136.03" fill="#b2b2b2" font-size="12.8" font-family="Liberation Sans, sans-serif" text-anchor="end" textLength="70.5" lengthAdjust="spacingAndGlyphs">0.00003200</text><text x="1598" y="178.23" fill="#b2b2b2" font-size="12.8" font-family="Liberation Sans, sans-serif" text-anchor="end" textLength="70.5" lengthAdjust="spacingAndGlyphs">0.00003000</text><text x="1598" y="223.36" fill="#b2b2b2" font-size="12.8" font-family="Liberation Sans, sans-serif" text-anchor="end" textLength="70.5" lengthAdjust="spacingAndGlyphs">0.00002800</text><text x="1598" y="271.82" fill="#b2b2b2" font-size="12.8" font-family="Liberation Sans, sans-serif" text-anchor="end" textLength="70.5" lengthAdjust="spacingAndGlyphs">0.00002600</text><text x="1598" y="324.17" fill="#b2b2b2" font-size="12.8" font-family="Liberation Sans, sans-serif" text-anchor="end" textLength="70.5" lengthAdjust="spacingAndGlyphs">0.00002400</text><text x="1598" y="411.5" fill="#b2b2b2" font-size="12.8" font-family="Liberation Sans, sans-serif" text-anchor="end" textLength="70.5" lengthAdjust="spacingAndGlyphs">0.00002100</text><text x="1598" y="443.41" fill="#b2b2b2" font-size="12.8" font-family="Liberation Sans, sans-serif" text-anchor="end" textLength="70.5" lengthAdjust="spacingAndGlyphs">0.00002000</text><text x="1598" y="476.95" fill="#b2b2b2" font-size="12.8" font-family="Liberation Sans, sans-serif" text-anchor="end" textLength="70.5" lengthAdjust="spacingAndGlyphs">0.00001900</text><text x="1598" y="512.31" fill="#b2b2b2" font-size="12.8" font-family="Liberation Sans, sans-serif" text-anchor="end" textLength="70.5" lengthAdjust="spacingAndGlyphs">0.00001800</text><text x="1598" y="549.7" fill="#b2b2b2" font-size="12.8" font-family="Liberation Sans, sans-serif" text-anchor="end" textLength="70.5" lengthAdjust="spacingAndGlyphs">0.00001700</text><text x="1598" y="581.22" fill="#b2b2b2" font-size="12.8" font-family="Liberation Sans, sans-serif" text-anchor="end" textLength="70.5" lengthAdjust="spacingAndGlyphs">0.00001620</text><text x="1598" y="614.34" fill="#b2b2b2" font-size="12.8" font-family="Liberation Sans, sans-serif" text-anchor="end" textLength="70.5" lengthAdjust="spacingAndGlyphs">0.00001540</text><text x="1598" y="644.77" fill="#b2b2b2" font-size="12.8" font-family="Liberation Sans, sans-serif" text-anchor="end" textLength="70.5" lengthAdjust="spacingAndGlyphs">0.00001470</text><text x="1598" y="676.67" fill="#b2b2b2" font-size="12.8" font-family="Liberation Sans, sans-serif" text-anchor="end" textLength="70.5" lengthAdjust="spacingAndGlyphs">0.00001400</text><rect x="1522.5" y="31" width="82" height="26" rx="5" fill="#111" stroke="#3a3a3a" stroke-width="1"/><text x="1531.6" y="48.2" fill="#e6e6e6" font-size="12.6" stroke="#e6e6e6" stroke-width="0.35" font-family="Liberation Sans, sans-serif" textLength="22.6" lengthAdjust="spacingAndGlyphs">BTC</text><path d="M1519 81 H1601 Q1604 81 1604 84 V95 Q1604 98 1601 98 H1519 Z" fill="#12ece8"/><text x="1598" y="93.5" fill="#0b2b2b" font-size="12.8" font-family="Liberation Sans, sans-serif" text-anchor="end" textLength="70.5" lengthAdjust="spacingAndGlyphs">0.00003419</text><path d="M1519 348 H1601 Q1604 348 1604 351 V376 Q1604 379 1601 379 H1519 Z" fill="#f5454f"/><text x="1598" y="361" fill="#ffffff" font-size="12.8" font-family="Liberation Sans, sans-serif" text-anchor="end" textLength="70.5" lengthAdjust="spacingAndGlyphs">0.00002273</text><text x="1528" y="375" fill="#ffffff" font-size="12.8" font-family="Liberation Sans, sans-serif" textLength="51" lengthAdjust="spacingAndGlyphs">12:52:51</text><rect x="10" y="699" width="1597" height="1" fill="#3a3a3a"/><line x1="10" y1="747.5" x2="1518" y2="747.5" stroke="#9a9a9a" stroke-width="1" stroke-dasharray="5 6"/><line x1="10" y1="777.5" x2="1518" y2="777.5" stroke="#9a9a9a" stroke-width="1" stroke-dasharray="5 6"/><line x1="10" y1="807.5" x2="1518" y2="807.5" stroke="#9a9a9a" stroke-width="1" stroke-dasharray="5 6"/><g clip-path="url(#cr)"><polyline fill="none" stroke="#cfe0fa" stroke-width="2" stroke-linejoin="round" stroke-linecap="round" points="10.2,771.99 20.4,768.52 26.51,772.6 31.61,772.6 36.3,774.03 41.81,762.4 46.91,765.87 52.62,771.17 62.21,770.97 67.31,773.62 73.02,773.62 78.11,782.19 82.6,784.23 89.74,790.35 93.82,792.39 98.92,790.96 104.02,795.65 109.12,797.69 115.23,801.77 120.33,797.69 125.43,789.94 129.51,786.27 134.61,795.65 140.73,799.73 145.83,803.2 150.93,786.88 156.03,788.31 161.12,792.39 167.24,779.74 172.34,780.15 178.46,782.8 183.56,784.84 188.66,785.86 193.76,790.35 198.86,788.92 203.96,787.29 208.03,788.92 214.15,795.04 219.25,796.46 224.35,796.46 229.45,799.12 234.55,803.4 239.65,801.16 244.75,784.23 249.85,782.19 261.06,794.02 266.16,797.69 271.26,799.12 276.36,799.12 281.46,797.69 286.56,801.77 296.76,808.7 301.85,794.43 306.95,789.53 313.07,775.25 318.17,787.49 323.27,762.4 328.16,761.79 333.26,764.44 338.36,783.41 343.45,783.82 348.55,785.25 353.65,785.45 359.77,788.92 364.87,793 369.97,795.04 375.07,796.06 380.17,800.14 385.27,795.65 390.36,797.08 396.48,801.16 401.58,798.1 405.66,800.14 411.78,796.46 416.88,804.62 421.98,800.14 427.08,801.77 432.18,799.12 437.89,787.49 442.37,790.35 448.08,796.06 453.59,794.43 458.69,796.06 464.4,779.33 469.91,785.45 475.01,786.88 480.11,787.49 484.8,789.94 490.3,797.08 495.4,795.65 500.5,789.53 505.19,781.37 511.31,786.88 515.8,785.45 520.9,785.86 526,788.92 531.09,794.02 536.6,797.69 541.29,784.84 546.39,781.37 551.49,788.31 557,798.1 562.71,790.35 567.81,782.8 572.9,782.8 578,772.6 584.12,778.11 588.2,779.33 594.32,777.7 599.42,778.11 604.52,779.74 609.62,773.21 614.72,769.13 619.81,763.42 625.93,755.67 631.03,750.17 636.13,737.32 641.84,736.5 645.1,733.24 650.61,727.73 655.3,726.71 661.42,722.63 666.92,713.45 672.22,718.96 677.73,718.55 682.83,716.92 687.93,715.49 693.03,726.71 698.13,760.98 703.23,763.83 708.33,763.02 713.42,761.79 718.52,759.34 723.62,767.1 728.72,765.87 733.82,768.52 739.94,771.17 745.04,771.17 750.14,787.49 755.23,774.03 761.35,767.1 766.45,774.03 770.53,773.62 776.24,756.9 780.73,757.71 786.85,762.4 791.95,771.99 797.05,775.25 802.14,768.52 807.24,774.03 813.36,779.33 818.46,777.29 823.56,775.25 828.66,776.68 833.76,776.68 838.86,785.86 843.96,780.15 849.05,785.45 854.15,775.25 859.25,774.03 865.37,771.17 870.06,779.33 875.57,769.13 880.67,771.99 885.77,775.25 890.87,778.72 895.96,780.15 901.06,783.41 906.77,787.9 912.28,781.37 917.38,784.23 921.87,786.88 927.58,783.82 932.68,782.8 937.78,776.68 942.87,768.52 947.97,769.95 953.07,774.03 958.17,771.99 964.29,765.06 969.18,763.42 974.28,774.03 979.38,778.72 984.47,778.72 990.19,771.17 995.69,775.66 1000.79,781.37 1005.89,783.41 1010.99,781.78 1016.09,789.53 1021.19,790.96 1025.67,778.72 1031.79,788.92 1037.5,784.23 1042.6,780.76 1047.7,781.78 1052.8,787.9 1057.9,790.96 1063,792.39 1068.1,784.84 1073.2,790.96 1078.29,798.5 1083.39,800.54 1088.49,801.77 1093.59,806.66 1098.69,809.31 1104.81,812.37 1109.91,825.63 1115.01,815.43 1120.11,805.85 1124.8,795.65 1130.3,799.73 1135.4,802.58 1140.5,805.23 1145.6,805.23 1150.7,796.06 1156.82,796.06 1161.92,785.86 1167.01,788.92 1172.11,793 1177.21,795.65 1182.31,784.23 1188.02,772.6 1193.53,774.64 1198.63,775.25 1203.73,775.66 1208.83,773.62 1213.92,783.82 1219.02,778.11 1225.14,779.74 1230.24,778.11 1234.93,795.04 1239.42,794.02 1244.52,779.74 1249.62,788.92 1255.33,780.76 1259.81,780.76 1265.93,777.29 1271.03,762.4 1276.13,771.17 1281.84,767.91 1286.33,770.56 1287.14,771.17 1292.24,765.87 1297.34,770.56 1302.44,769.13 1308.15,769.95 1313.04,765.06 1318.34,777.29 1323.85,777.29 1328.95,779.74 1334.66,782.19"/></g><g clip-path="url(#ca)"><text x="1527.8" y="706.45" fill="#b2b2b2" font-size="12.8" font-family="Liberation Sans, sans-serif">100.00</text></g><g clip-path="url(#ca)"><text x="1527.8" y="736.35" fill="#b2b2b2" font-size="12.8" font-family="Liberation Sans, sans-serif">80.00</text></g><g clip-path="url(#ca)"><text x="1527.8" y="766.25" fill="#b2b2b2" font-size="12.8" font-family="Liberation Sans, sans-serif">60.00</text></g><g clip-path="url(#ca)"><text x="1527.8" y="796.15" fill="#b2b2b2" font-size="12.8" font-family="Liberation Sans, sans-serif">40.00</text></g><g clip-path="url(#ca)"><text x="1527.8" y="826.05" fill="#b2b2b2" font-size="12.8" font-family="Liberation Sans, sans-serif">20.00</text></g><path d="M1494 774 H1518 V790.5 H1494 Q1491 790.5 1491 787.5 V777 Q1491 774 1494 774 Z" fill="#c3dcf7"/><path d="M1519 774 H1562.5 Q1565.5 774 1565.5 777 V787.5 Q1565.5 790.5 1562.5 790.5 H1519 Z" fill="#c3dcf7"/><text x="1495.8" y="787" fill="#1a1f2b" font-size="12.6" font-family="Liberation Sans, sans-serif" textLength="17.3" lengthAdjust="spacingAndGlyphs">RSI</text><text x="1527.8" y="787" fill="#1a1f2b" font-size="12.8" font-family="Liberation Sans, sans-serif">46.59</text><text x="109.5" y="857.2" fill="#b8b8b8" font-size="12.3" font-weight="bold" font-family="Liberation Sans, sans-serif" text-anchor="middle">Apr</text><text x="265.8" y="857.2" fill="#b8b8b8" font-size="12.3" font-weight="bold" font-family="Liberation Sans, sans-serif" text-anchor="middle">May</text><text x="427.2" y="857.2" fill="#b8b8b8" font-size="12.3" font-weight="bold" font-family="Liberation Sans, sans-serif" text-anchor="middle">Jun</text><text x="583.5" y="857.2" fill="#b8b8b8" font-size="12.3" font-weight="bold" font-family="Liberation Sans, sans-serif" text-anchor="middle">Jul</text><text x="745.1" y="857.2" fill="#b8b8b8" font-size="12.3" font-weight="bold" font-family="Liberation Sans, sans-serif" text-anchor="middle">Aug</text><text x="906.4" y="857.2" fill="#b8b8b8" font-size="12.3" font-weight="bold" font-family="Liberation Sans, sans-serif" text-anchor="middle">Sep</text><text x="1062.8" y="857.2" fill="#b8b8b8" font-size="12.3" font-weight="bold" font-family="Liberation Sans, sans-serif" text-anchor="middle">Oct</text><text x="1224.4" y="857.2" fill="#b8b8b8" font-size="12.3" font-weight="bold" font-family="Liberation Sans, sans-serif" text-anchor="middle">Nov</text><text x="1380.7" y="857.2" fill="#b8b8b8" font-size="12.3" font-weight="bold" font-family="Liberation Sans, sans-serif" text-anchor="middle">Dec</text><g fill="#e0e0e0"><path d="M12 887.8 H23.9 V903.2 H17.2 V893.4 H12 Z"/><circle cx="29.5" cy="890.6" r="2.8"/><path d="M33.4 887.8 H42 L36.7 903.2 H29.1 Z"/></g><text x="48.9" y="903" fill="#e0e0e0" font-size="20.3" font-weight="bold" font-family="Liberation Sans, sans-serif" textLength="121" lengthAdjust="spacingAndGlyphs">TradingView</text></svg>
</body></html>
